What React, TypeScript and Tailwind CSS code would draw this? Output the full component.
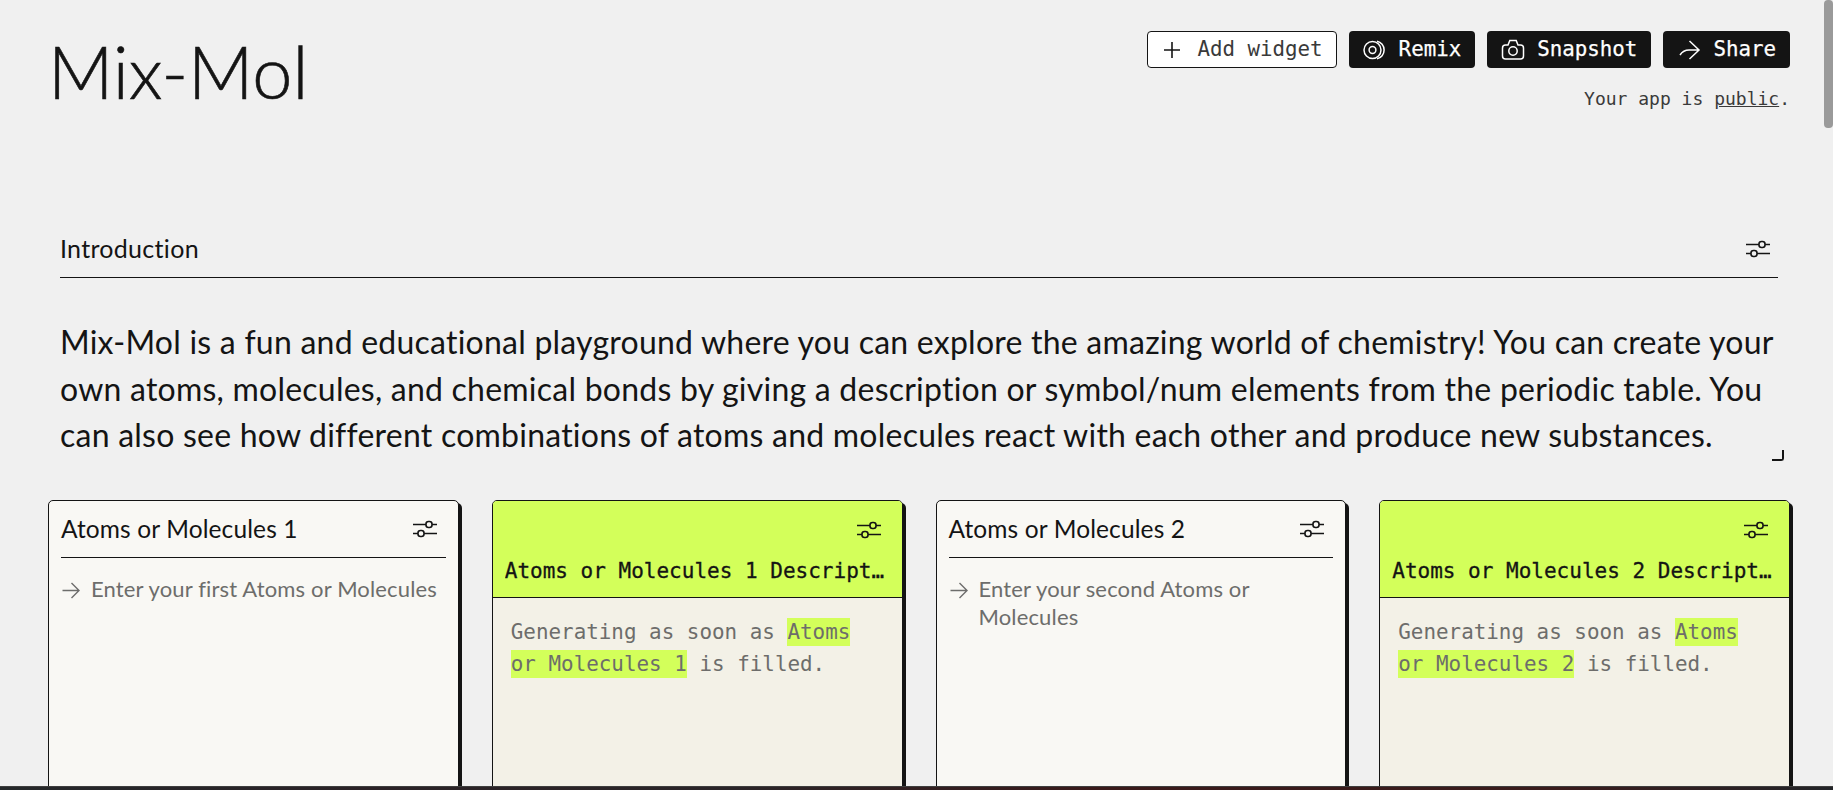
const sans = "font-['Lato','Inter',sans-serif]";
const mono = "font-['DejaVu_Sans_Mono',monospace]";

function Sliders({ className = "" }: { className?: string }) {
  return (
    <svg viewBox="0 0 24 24" width="24" height="24" fill="none" stroke="#141414" strokeWidth="1.6" className={className}>
      <path d="M0 7.500H13M19 7.500H24M0 16.500H5M11 16.500H24" />
      <rect x="13" y="4.500" width="6" height="6" rx="2.500" />
      <rect x="5" y="13.500" width="6" height="6" rx="2.500" />
    </svg>
  );
}

function Arrow({ stroke = "#141414", size = 20 }: { stroke?: string; size?: number }) {
  return (
    <svg viewBox="0 0 20 20" width={size} height={size} fill="none" stroke={stroke} strokeWidth="1.4" className="mt-[5px] shrink-0">
      <path d="M1.500 10.500H18M10.500 3L18 10.500L10.500 18" />
    </svg>
  );
}

function ActionButton({ icon, label, light }: { icon: React.ReactNode; label: string; light?: boolean }) {
  return (
    <div className={light
      ? `flex h-[37px] items-center gap-[16px] rounded-[4px] border border-[#141414] bg-white pl-[15px] pr-[13px] text-[20.800px] text-[#3a3a3a] ${mono}`
      : `flex h-[37px] items-center gap-[12px] rounded-[4px] bg-[#141414] px-[14px] text-[20.800px] text-white [-webkit-text-stroke:0.250px_#ffffff] ${mono}`}>
      {icon}
      <span>{label}</span>
    </div>
  );
}

function InputCard({ title, placeholder }: { title: string; placeholder: string }) {
  return (
    <div className="flex h-[400px] flex-col rounded-[5px] border border-[#141414] bg-[#f9f8f4] px-[12px] shadow-[3px_3px_0_0_#141414]">
      <div className="flex h-[57px] items-center justify-between border-b border-[#141414]">
        <span className={`text-[24.500px] tracking-[0.120px] text-[#141414] ${sans}`}>{title}</span>
        <Sliders className="mr-[9px]" />
      </div>
      <div className={`mt-[17px] flex gap-[10px] text-[22px] leading-[28px] tracking-[0.150px] text-[#6d6d6b] ${sans}`}>
        <Arrow stroke="#6d6d6b" size={20} />
        <span>{placeholder}</span>
      </div>
    </div>
  );
}

function OutputCard({ n }: { n: number }) {
  return (
    <div className="flex h-[400px] flex-col overflow-hidden rounded-[5px] border border-[#141414] bg-[#f3f1e7] shadow-[3px_3px_0_0_#141414]">
      <div className="flex h-[97px] shrink-0 flex-col border-b border-[#141414] bg-[#d3ff5a] px-[12px]">
        <div className="flex justify-end pt-[17px]"><Sliders className="mr-[9px]" /></div>
        <div className={`mt-[15px] truncate text-[21px] leading-[28px] text-[#141414] [-webkit-text-stroke:0.300px_#141414] ${mono}`}>Atoms or Molecules {n} Description</div>
      </div>
      <div className={`px-[18px] pt-[18px] text-[20.900px] leading-[32px] text-[#6d6d6b] ${mono}`}>
        Generating as soon as <span className="bg-[#d3ff5a] py-[2px]">Atoms or Molecules {n}</span> is filled.
      </div>
    </div>
  );
}

export default function App() {
  return (
    <div className={`relative h-[790px] overflow-hidden bg-[#f0f0f0] ${sans}`}>
      <div className="flex flex-col pl-[48px] pr-[43px]">
        <header className="flex h-[192px] items-start justify-between">
          <h1 className="mt-[26px] text-[72px] font-light leading-[90px] text-[#141414] [-webkit-text-stroke:0.600px_#141414]">Mix-Mol</h1>
          <div className="flex flex-col items-end pt-[31px]">
            <div className="flex gap-[12px]">
              <ActionButton light label="Add widget" icon={<svg viewBox="0 0 18 18" width="18" height="18" stroke="#141414" strokeWidth="1.6"><path d="M9 1V17M1 9H17" /></svg>} />
              <ActionButton label="Remix" icon={<svg viewBox="0 0 24 24" width="24" height="24" fill="none" stroke="#fff" strokeWidth="1.5"><circle cx="9.500" cy="12" r="8.500" /><path d="M14 3.200A9 9 0 0 1 14 20.800" /><circle cx="9.500" cy="12" r="3.400" /></svg>} />
              <ActionButton label="Snapshot" icon={<svg viewBox="0 0 24 24" width="24" height="24" fill="none" stroke="#fff" strokeWidth="1.5"><path d="M1.500 10A3 3 0 0 1 4.500 7H7L8.800 2.500H15.200L17 7H19.500A3 3 0 0 1 22.500 10V18A3 3 0 0 1 19.500 21H4.500A3 3 0 0 1 1.500 18Z" /><circle cx="12" cy="13" r="4.200" /></svg>} />
              <ActionButton label="Share" icon={<svg viewBox="0 0 24 24" width="24" height="24" fill="none" stroke="#fff" strokeWidth="1.5"><path d="M3 17C5 14 8 12 12 12H22M12.500 3L22 12L12.500 21" /></svg>} />
            </div>
            <p className={`mt-[18px] text-[18px] leading-[26px] text-[#3a3a3a] ${mono}`}>Your app is <span className="underline">public</span>.</p>
          </div>
        </header>

        <section className="relative ml-[12px] mr-[12px] h-[308px]">
          <div className="flex h-[86px] items-center justify-between border-b border-[#141414] pt-[29px]">
            <span className="text-[25px] tracking-[0.300px] text-[#141414]">Introduction</span>
            <Sliders className="mr-[8px]" />
          </div>
          <p className="mt-[41px] text-[32px] leading-[46.500px] tracking-[0.230px] text-[#141414]">
            Mix-Mol is a fun and educational playground where you can explore the amazing world of chemistry! You can create your own atoms, molecules, and chemical bonds by giving a description or symbol/num elements from the periodic table. You can also see how different combinations of atoms and molecules react with each other and produce new substances.
          </p>
          <div className="absolute bottom-[39px] right-[-6px] h-[11px] w-[12px] rounded-br-[3px] border-b-2 border-r-2 border-[#141414]" />
        </section>

        <div className="grid grid-cols-4 gap-[33px]">
          <InputCard title="Atoms or Molecules 1" placeholder="Enter your first Atoms or Molecules" />
          <OutputCard n={1} />
          <InputCard title="Atoms or Molecules 2" placeholder="Enter your second Atoms or Molecules" />
          <OutputCard n={2} />
        </div>
      </div>

      <div className="absolute right-0 top-0 h-[128px] w-[9px] rounded-[4px] bg-[#9a9a9a]" />
      <div className="absolute bottom-0 left-0 right-0 h-[4px] border-t border-t-[#3e3e3e] bg-[linear-gradient(90deg,#25282a,#2b2226_20%,#2a2528_40%,#3a1a1a_60%,#3a1c1c_85%,#222428)]" />
    </div>
  );
}
